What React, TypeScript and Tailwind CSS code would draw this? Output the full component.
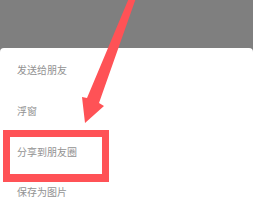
import React from "react";

const items = ["发送给朋友", "浮窗", "分享到朋友圈", "保存为图片"];

const App = () => {
  return (
    <div
      className="relative w-[253px] h-[213px] overflow-hidden bg-[#7f7f7f]"
      style={{ fontFamily: '"Noto Sans CJK SC", "Noto Sans", sans-serif' }}
    >
      <div className="h-[48px]" />
      <div className="h-[165px] bg-white rounded-t-[4px] pt-[1.5px]">
        <ul className="flex flex-col">
          {items.map((label) => (
            <li
              key={label}
              className="h-[40.67px] flex items-center pl-[17px] text-[10px] text-[#929292]"
            >
              {label}
            </li>
          ))}
        </ul>
      </div>

      {/* annotation: highlight box */}
      <div className="absolute left-[3px] top-[130px] w-[106px] h-[52px] border-[7px] border-b-[8px] border-[#ff5256]" />

      {/* annotation: arrow */}
      <svg
        className="absolute left-0 top-0"
        width="253"
        height="213"
        viewBox="0 0 253 213"
      >
        <polygon
          points="129,-2 136,-2 99,103 104,106 85,123 82,97 87,98"
          fill="#ff5256"
        />
      </svg>
    </div>
  );
};

export default App;
